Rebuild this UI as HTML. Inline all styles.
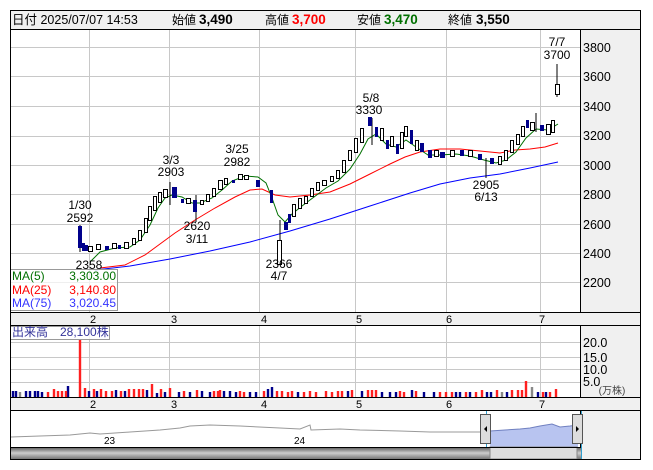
<!DOCTYPE html>
<html><head><meta charset="utf-8"><style>
html,body{margin:0;padding:0;background:#fff;width:653px;height:470px;overflow:hidden}
svg{display:block;font-family:"Liberation Sans","Noto Sans CJK JP",sans-serif}
</style></head><body>
<svg width="653" height="470" viewBox="0 0 653 470">
<rect x="0" y="0" width="653" height="470" fill="#fff"/>
<!-- header -->
<rect x="10.5" y="10.5" width="630" height="19" fill="#f0f0f0" stroke="#000"/>
<text x="12" y="24" font-size="12.5" fill="#000">日付 2025/07/07 14:53</text>
<text x="172" y="24" font-size="12" fill="#000">始値</text><text x="199" y="24" font-size="13.5" font-weight="bold">3,490</text>
<text x="265" y="24" font-size="12">高値</text><text x="292" y="24" font-size="13.5" font-weight="bold" fill="#f00">3,700</text>
<text x="357" y="24" font-size="12">安値</text><text x="384" y="24" font-size="13.5" font-weight="bold" fill="#007000">3,470</text>
<text x="448" y="24" font-size="12">終値</text><text x="476" y="24" font-size="13.5" font-weight="bold">3,550</text>
<!-- main chart frame -->
<rect x="10.5" y="29.5" width="630" height="430" fill="none" stroke="#000"/>
<rect x="580.5" y="30" width="60" height="282" fill="#f0f0f0"/>
<line x1="580.5" y1="30" x2="580.5" y2="312" stroke="#000"/>
<!-- grid -->
<g stroke="#c8c8c8" stroke-width="1">
<line x1="11" y1="47.5" x2="580" y2="47.5"/><line x1="11" y1="76.5" x2="580" y2="76.5"/><line x1="11" y1="106.5" x2="580" y2="106.5"/><line x1="11" y1="136.5" x2="580" y2="136.5"/><line x1="11" y1="165.5" x2="580" y2="165.5"/><line x1="11" y1="194.5" x2="580" y2="194.5"/><line x1="11" y1="224.5" x2="580" y2="224.5"/><line x1="11" y1="253.5" x2="580" y2="253.5"/><line x1="11" y1="282.5" x2="580" y2="282.5"/>
<line x1="89.5" y1="30" x2="89.5" y2="312"/><line x1="169.5" y1="30" x2="169.5" y2="312"/><line x1="259.5" y1="30" x2="259.5" y2="312"/><line x1="355.5" y1="30" x2="355.5" y2="312"/><line x1="446.5" y1="30" x2="446.5" y2="312"/><line x1="540.5" y1="30" x2="540.5" y2="312"/>
</g>
<g font-size="12.5" fill="#000">
<text x="583" y="52">3800</text><text x="583" y="81">3600</text><text x="583" y="111">3400</text><text x="583" y="140">3200</text><text x="583" y="170">3000</text><text x="583" y="199">2800</text><text x="583" y="229">2600</text><text x="583" y="258">2400</text><text x="583" y="287">2200</text>
</g>
<!-- MA lines -->
<polyline fill="none" stroke="#0000ff" stroke-width="1" points="95,270 130,266 170,259 210,251 250,242 290,231 330,219 370,206 410,193 440,184 470,178 500,174 530,168 558,162"/>
<polyline fill="none" stroke="#ff0000" stroke-width="1" points="100,268 125,265 145,255 160,244 175,233 195,220 215,208 235,197 250,190 262,189 275,195 290,197 310,195 330,192 350,184 370,174 390,164 405,157 420,152 440,149 460,149 480,151 500,153 515,150 530,149 545,147 558,143"/>
<polyline fill="none" stroke="#007000" stroke-width="1" points="90,262 100,252 115,248 130,247 140,240 150,225 158,208 165,198 172,195 182,197 192,203 200,203 212,198 222,190 232,181 245,176 258,177 266,183 272,198 278,215 285,222 292,214 302,206 314,197 326,188 338,181 350,169 360,154 368,139 376,134 386,144 396,147 406,140 416,147 428,155 440,155 456,154 470,156 484,160 496,163 506,160 516,152 526,138 536,129 548,130 558,124"/>
<!-- candles -->
<g stroke="#000" stroke-width="1">
<line x1="80" y1="225" x2="80" y2="252"/><line x1="170" y1="182" x2="170" y2="205"/><line x1="196" y1="195" x2="196" y2="222"/><line x1="280" y1="220" x2="280" y2="265"/><line x1="372" y1="118" x2="372" y2="145"/><line x1="557" y1="64" x2="557" y2="97"/>
<line x1="486" y1="158" x2="486" y2="178"/><line x1="536" y1="113" x2="536" y2="132"/>
</g>
<g fill="#00008b">
<rect x="78" y="226" width="4" height="22"/><rect x="82" y="243" width="3" height="8"/><rect x="85" y="245" width="3" height="6"/>
<rect x="105" y="246" width="4" height="4"/><rect x="118" y="245" width="3" height="4"/>
<rect x="172" y="187" width="5" height="11"/><rect x="181" y="199" width="3" height="4"/><rect x="193" y="200" width="4" height="12"/>
<rect x="232" y="180" width="3" height="3"/><rect x="256" y="180" width="4" height="7"/><rect x="270" y="190" width="3" height="13"/>
<rect x="284" y="222" width="4" height="8"/><rect x="288" y="214" width="3" height="9"/>
<rect x="368" y="117" width="4" height="9"/><rect x="375" y="127" width="3" height="10"/><rect x="386" y="140" width="3" height="9"/><rect x="396" y="144" width="3" height="10"/>
<rect x="410" y="130" width="3" height="14"/><rect x="420" y="143" width="4" height="9"/><rect x="428" y="150" width="4" height="8"/><rect x="440" y="152" width="5" height="6"/><rect x="460" y="150" width="4" height="6"/><rect x="478" y="154" width="4" height="6"/><rect x="490" y="158" width="4" height="6"/><rect x="526" y="120" width="3" height="8"/><rect x="540" y="125" width="4" height="6"/>
</g>
<g fill="#fff" stroke="#000" stroke-width="1">
<rect x="88.5" y="246.5" width="4" height="5"/><rect x="96.5" y="244.5" width="4" height="5"/><rect x="112.5" y="243.5" width="4" height="5"/><rect x="124.5" y="242.5" width="4" height="6"/><rect x="132.5" y="238.5" width="3" height="6"/><rect x="138.5" y="230.5" width="3" height="10"/><rect x="144.5" y="218.5" width="3" height="14"/><rect x="148.5" y="206.5" width="3" height="14"/><rect x="153.5" y="196.5" width="3" height="14"/><rect x="158.5" y="192.5" width="3" height="10"/><rect x="163.5" y="189.5" width="4" height="8"/>
<rect x="186.5" y="198.5" width="4" height="5"/><rect x="200.5" y="200.5" width="3" height="4"/><rect x="206.5" y="194.5" width="3" height="7"/><rect x="212.5" y="188.5" width="3" height="8"/><rect x="218.5" y="180.5" width="4" height="9"/><rect x="224.5" y="178.5" width="3" height="6"/><rect x="238.5" y="174.5" width="4" height="5"/><rect x="244.5" y="175.5" width="4" height="4"/>
<rect x="277.5" y="240.5" width="4" height="24"/><rect x="292.5" y="204.5" width="3" height="12"/><rect x="298.5" y="198.5" width="3" height="10"/><rect x="304.5" y="196.5" width="3" height="7"/><rect x="310.5" y="188.5" width="3" height="8"/><rect x="316.5" y="182.5" width="3" height="8"/><rect x="322.5" y="180.5" width="4" height="5"/><rect x="330.5" y="176.5" width="3" height="5"/><rect x="336.5" y="170.5" width="3" height="8"/><rect x="342.5" y="160.5" width="3" height="12"/><rect x="348.5" y="150.5" width="3" height="10"/><rect x="354.5" y="138.5" width="3" height="14"/><rect x="360.5" y="128.5" width="3" height="14"/><rect x="380.5" y="128.5" width="3" height="12"/><rect x="390.5" y="136.5" width="3" height="10"/><rect x="400.5" y="132.5" width="3" height="16"/><rect x="404.5" y="126.5" width="3" height="10"/><rect x="415.5" y="140.5" width="3" height="10"/><rect x="434.5" y="150.5" width="4" height="6"/><rect x="450.5" y="150.5" width="4" height="6"/><rect x="468.5" y="150.5" width="4" height="6"/><rect x="498.5" y="156.5" width="3" height="8"/><rect x="504.5" y="150.5" width="3" height="10"/><rect x="510.5" y="140.5" width="3" height="12"/><rect x="516.5" y="134.5" width="3" height="10"/><rect x="521.5" y="126.5" width="3" height="10"/><rect x="530.5" y="122.5" width="4" height="8"/><rect x="546.5" y="124.5" width="4" height="10"/><rect x="551.5" y="120.5" width="3" height="12"/><rect x="555.5" y="84.5" width="4" height="10"/>
</g>
<!-- annotations -->
<g font-size="12" fill="#000" text-anchor="middle">
<text x="80" y="209">1/30</text><text x="80" y="222">2592</text>
<text x="89" y="269">2358</text>
<text x="171" y="164">3/3</text><text x="171" y="176">2903</text>
<text x="197" y="230">2620</text><text x="197" y="243">3/11</text>
<text x="237" y="153">3/25</text><text x="237" y="166">2982</text>
<text x="279" y="268">2366</text><text x="279" y="280">4/7</text>
<text x="371" y="102">5/8</text><text x="369" y="114">3330</text>
<text x="486" y="189">2905</text><text x="486" y="201">6/13</text>
<text x="557" y="46">7/7</text><text x="557" y="59">3700</text>
</g>
<!-- legend -->
<rect x="10.5" y="269.5" width="107" height="41" fill="#fff" fill-opacity="0.7" stroke="#999"/>
<g font-size="12">
<text x="12" y="280" fill="#007000">MA(5)</text><text x="116" y="280" fill="#007000" text-anchor="end">3,303.00</text>
<text x="12" y="294" fill="#ff0000">MA(25)</text><text x="116" y="294" fill="#ff0000" text-anchor="end">3,140.80</text>
<text x="12" y="307" fill="#3333ff">MA(75)</text><text x="116" y="307" fill="#3333ff" text-anchor="end">3,020.45</text>
</g>
<!-- x axis band 1 -->
<rect x="11" y="312" width="629" height="13" fill="#f0f0f0"/>
<line x1="11" y1="312.5" x2="640" y2="312.5" stroke="#000"/><line x1="11" y1="325.5" x2="640" y2="325.5" stroke="#000"/>
<g font-size="11" fill="#000" text-anchor="middle">
<text x="93" y="323">2</text><text x="174" y="323">3</text><text x="264" y="323">4</text><text x="359" y="323">5</text><text x="449" y="323">6</text><text x="542" y="323">7</text>
</g>
<!-- volume panel -->
<rect x="580.5" y="326" width="60" height="71" fill="#f0f0f0"/>
<line x1="580.5" y1="326" x2="580.5" y2="397" stroke="#000"/>
<g stroke="#c8c8c8">
<line x1="11" y1="342.5" x2="580" y2="342.5"/><line x1="11" y1="357.5" x2="580" y2="357.5"/><line x1="11" y1="369.5" x2="580" y2="369.5"/><line x1="11" y1="382.5" x2="580" y2="382.5"/>
<line x1="89.5" y1="326" x2="89.5" y2="397"/><line x1="169.5" y1="326" x2="169.5" y2="397"/><line x1="259.5" y1="326" x2="259.5" y2="397"/><line x1="355.5" y1="326" x2="355.5" y2="397"/><line x1="446.5" y1="326" x2="446.5" y2="397"/><line x1="540.5" y1="326" x2="540.5" y2="397"/>
</g>
<g font-size="12.5"><text x="583" y="347">20.0</text><text x="583" y="362">15.0</text><text x="583" y="374">10.0</text><text x="583" y="386">5.0</text></g>
<text x="612" y="394" font-size="10" fill="#444" text-anchor="middle">(万株)</text>
<path stroke-width="2.4" fill="none" stroke="#00008b" d="M13 397v-6M16 397v-6M26 397v-6M30 397v-6M35 397v-6M38 397v-6M42 397v-5M68 397v-11M89 397v-6M97 397v-6M116 397v-7M125 397v-6M147 397v-7M157 397v-4M165 397v-5M179 397v-5M190 397v-5M202 397v-6M210 397v-5M224 397v-6M230 397v-6M236 397v-5M250 397v-5M256 397v-5M268 397v-8M272 397v-10M298 397v-5M348 397v-6M362 397v-6M382 397v-5M390 397v-5M396 397v-5M412 397v-7M424 397v-5M434 397v-5M456 397v-5M460 397v-5M470 397v-5M487 397v-5M491 397v-5M507 397v-5M538 397v-5M546 397v-5"/>
<path stroke-width="2.4" fill="none" stroke="#ff2020" d="M48 397v-5M54 397v-8M58 397v-6M62 397v-6M66 397v-6M80 397v-57M85 397v-9M94 397v-8M101 397v-8M106 397v-6M112 397v-6M121 397v-6M129 397v-8M134 397v-8M139 397v-8M143 397v-8M152 397v-13M161 397v-8M170 397v-9M184 397v-6M197 397v-7M214 397v-6M218 397v-6M220 397v-7M240 397v-6M244 397v-5M264 397v-6M277 397v-6M282 397v-6M288 397v-5M292 397v-6M304 397v-5M310 397v-6M316 397v-5M326 397v-6M332 397v-5M338 397v-6M342 397v-6M352 397v-7M368 397v-7M372 397v-7M376 397v-7M400 397v-6M404 397v-5M416 397v-6M440 397v-5M446 397v-5M452 397v-5M466 397v-5M476 397v-5M482 397v-7M497 397v-7M512 397v-7M518 397v-7M522 397v-7M526 397v-16M543 397v-5M550 397v-5M556 397v-8"/>
<path stroke-width="2.4" fill="none" stroke="#888" d="M20 397v-5M502 397v-5M532 397v-10"/>
<rect x="10.5" y="326.5" width="99" height="13" fill="#fff" fill-opacity="0.8" stroke="#999"/>
<text x="12" y="336" font-size="12" fill="#33339a">出来高　28,100株</text>
<!-- x axis band 2 -->
<rect x="11" y="397" width="629" height="13" fill="#f0f0f0"/>
<line x1="11" y1="397.5" x2="640" y2="397.5" stroke="#000"/><line x1="11" y1="410.5" x2="640" y2="410.5" stroke="#000"/>
<g font-size="11" fill="#000" text-anchor="middle">
<text x="93" y="408">2</text><text x="174" y="408">3</text><text x="264" y="408">4</text><text x="359" y="408">5</text><text x="449" y="408">6</text><text x="542" y="408">7</text>
</g>
<!-- navigator -->
<rect x="11" y="411" width="629" height="48" fill="#f0f0f0"/>
<rect x="11" y="411" width="570" height="36" fill="#fff"/>
<line x1="580.5" y1="411" x2="580.5" y2="459" stroke="#000"/>
<polygon fill="#b8c4f0" points="490,447 490,431 505,430 520,429 530,428 540,426 552,424 560,427 570,426 578,425 578,447"/>
<polyline fill="none" stroke="#999" points="11,437 40,436 70,435 90,433 100,434 130,432 160,430 180,428 190,426 210,425 240,426 280,428 300,429 310,425 311,430 340,429 360,430 400,431 430,432 470,432 490,432"/>
<polyline fill="none" stroke="#7080c0" points="490,431 505,430 520,429 530,428 540,426 552,424 560,427 570,426 578,425"/>
<g font-size="10" fill="#000"><text x="104" y="444">23</text><text x="294" y="444">24</text></g>
<line x1="486.5" y1="411" x2="486.5" y2="459" stroke="#30a0d0"/>
<line x1="581.5" y1="411" x2="581.5" y2="459" stroke="#30a0d0"/>
<rect x="480.5" y="414.5" width="10" height="29" fill="#ddd" stroke="#555"/>
<polygon points="484,429 487,426 487,432" fill="#000"/>
<rect x="572.5" y="414.5" width="10" height="29" fill="#ddd" stroke="#555"/>
<polygon points="579,429 576,426 576,432" fill="#000"/>
<defs><linearGradient id="sb" x1="0" y1="0" x2="0" y2="1"><stop offset="0" stop-color="#555"/><stop offset="0.5" stop-color="#ccc"/><stop offset="1" stop-color="#777"/></linearGradient></defs>
<rect x="11" y="447" width="570" height="12" fill="url(#sb)"/>
<rect x="490" y="447" width="87" height="12" fill="#ddd" stroke="#888"/>
<line x1="11" y1="447.5" x2="581" y2="447.5" stroke="#000"/>
<rect x="10.5" y="10.5" width="630" height="449" fill="none" stroke="#000"/>
</svg>
</body></html>
